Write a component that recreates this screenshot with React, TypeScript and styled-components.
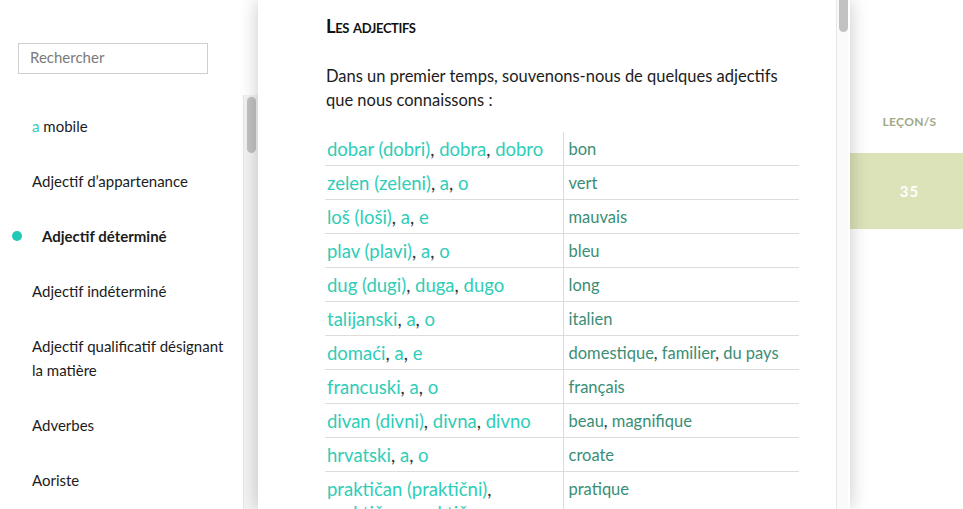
import React from "react";
import styled, { createGlobalStyle } from "styled-components";

const Global = createGlobalStyle`
  html, body { margin: 0; padding: 0; height: 100%; overflow: hidden; background: #fff; }
  #root { height: 100%; }
  * { box-sizing: border-box; }
  body { font-family: Lato, "Open Sans", sans-serif; color: #1c1c1c; }
`;

const Page = styled.div`
  display: flex;
  height: 509px;
  width: 963px;
  overflow: hidden;
`;

const Sidebar = styled.aside`
  width: 258px;
  flex: none;
  display: flex;
  flex-direction: column;
  background: #fff;
`;

const SearchWrap = styled.div`
  padding: 43px 0 0 18px;
  height: 95px;
  flex: none;
`;

const SearchInput = styled.input`
  width: 190px;
  height: 31px;
  border: 1px solid #cfcfcf;
  padding: 0 11px 3px;
  font-family: Lato, sans-serif;
  font-size: 15px;
  color: #333;
  outline: none;
  &::placeholder { color: #7a7a7a; }
`;

const ListArea = styled.div`
  flex: 1;
  display: flex;
  min-height: 0;
`;

const List = styled.ul`
  list-style: none;
  margin: 0;
  padding: 4px 0 0;
  flex: 1;
  overflow: hidden;
`;

const Item = styled.li<{ $active?: boolean }>`
  display: flex;
  align-items: center;
  padding: 15px 12px 16px ${(p) => (p.$active ? "12px" : "32px")};
  font-size: 15px;
  line-height: 24px;
  font-weight: ${(p) => (p.$active ? 700 : 400)};
  color: #1c1c1c;
`;

const Dot = styled.span`
  width: 10px;
  height: 10px;
  border-radius: 50%;
  background: #22c9b4;
  flex: none;
  margin-right: 20px;
`;

const Teal = styled.span`
  color: #2fcdb7;
`;

const Track = styled.div<{ $top: number; $len: number }>`
  width: 15px;
  flex: none;
  background: #f3f3f3;
  border-left: 1px solid #e6e6e6;
  padding: ${(p) => p.$top}px 0 0 3px;
  &::after {
    content: "";
    display: block;
    width: 9px;
    height: ${(p) => p.$len}px;
    border-radius: 5px;
    background: #c2c2c2;
  }
`;

const Main = styled.main`
  width: 592px;
  flex: none;
  display: flex;
  background: #fff;
  position: relative;
  z-index: 2;
  box-shadow: 0 0 18px rgba(0, 0, 0, 0.22);
`;

const Content = styled.div`
  flex: 1;
  padding: 16px 0 0 68px;
  overflow: hidden;
`;

const Heading = styled.h2`
  margin: 0;
  font-size: 18.5px;
  font-weight: 700;
  font-variant: small-caps;
  letter-spacing: -0.4px;
  line-height: 20px;
  color: #111;
`;

const Para = styled.p`
  margin: 28px 0 0;
  width: 472px;
  font-size: 16.5px;
  line-height: 24px;
  color: #1c1c1c;
`;

const Table = styled.table`
  margin-top: 20px;
  margin-left: -1px;
  border-collapse: collapse;
  width: 474px;
  table-layout: fixed;
`;

const Cell = styled.td<{ $word?: boolean }>`
  vertical-align: top;
  width: ${(p) => (p.$word ? "238px" : "auto")};
  padding: ${(p) => (p.$word ? "5px 4px 4px 2px" : "5px 4px 4px 5px")};
  line-height: 24px;
  font-size: ${(p) => (p.$word ? "18.5px" : "16.5px")};
  color: ${(p) => (p.$word ? "#2fcdb7" : "#3a8e76")};
  border-bottom: 1px solid #dcdcdc;
  border-left: ${(p) => (p.$word ? "none" : "1px solid #dcdcdc")};
`;

const Comma = styled.span`
  color: #333;
`;

const MainTrack = styled.div`
  width: 14px;
  flex: none;
  background: #fafafa;
  border-left: 1px solid #e8e8e8;
  border-right: 2px solid #fff;
  padding-left: 2px;
  &::after {
    content: "";
    display: block;
    width: 9px;
    height: 38px;
    margin-top: -6px;
    border-radius: 5px;
    background: #c2c2c2;
  }
`;

const Right = styled.aside`
  flex: 1;
  display: flex;
  flex-direction: column;
  background: #fff;
`;

const Label = styled.div`
  padding: 114px 0 0 6px;
  height: 153px;
  text-align: center;
  font-size: 12px;
  font-weight: 700;
  letter-spacing: 0.3px;
  color: #a1a787;
`;

const Lesson = styled.div`
  height: 76px;
  background: #dce3b9;
  display: flex;
  align-items: center;
  justify-content: center;
  padding-left: 6px;
  color: #fff;
  font-size: 15px;
  font-weight: 700;
  letter-spacing: 1px;
`;

const items: { label: React.ReactNode; active?: boolean }[] = [
  { label: <><Teal>a</Teal> mobile</> },
  { label: "Adjectif d’appartenance" },
  { label: "Adjectif déterminé", active: true },
  { label: "Adjectif indéterminé" },
  { label: "Adjectif qualificatif désignant la matière" },
  { label: "Adverbes" },
  { label: "Aoriste" },
  { label: "Article" },
];

const rows: [string, string][] = [
  ["dobar (dobri), dobra, dobro", "bon"],
  ["zelen (zeleni), a, o", "vert"],
  ["loš (loši), a, e", "mauvais"],
  ["plav (plavi), a, o", "bleu"],
  ["dug (dugi), duga, dugo", "long"],
  ["talijanski, a, o", "italien"],
  ["domaći, a, e", "domestique, familier, du pays"],
  ["francuski, a, o", "français"],
  ["divan (divni), divna, divno", "beau, magnifique"],
  ["hrvatski, a, o", "croate"],
  ["praktičan (praktični), praktična, praktično", "pratique"],
];

const withCommas = (s: string) =>
  s.split(", ").map((part, i, arr) => (
    <React.Fragment key={i}>
      {part}
      {i < arr.length - 1 && <><Comma>,</Comma> </>}
    </React.Fragment>
  ));

export default function App() {
  return (
    <>
      <Global />
      <Page>
        <Sidebar>
          <SearchWrap>
            <SearchInput placeholder="Rechercher" />
          </SearchWrap>
          <ListArea>
            <List>
              {items.map((it, i) => (
                <Item key={i} $active={it.active}>
                  {it.active && <Dot />}
                  <span>{it.label}</span>
                </Item>
              ))}
            </List>
            <Track $top={2} $len={56} />
          </ListArea>
        </Sidebar>
        <Main>
          <Content>
            <Heading>Les adjectifs</Heading>
            <Para>
              Dans un premier temps, souvenons-nous de quelques adjectifs que nous connaissons :
            </Para>
            <Table>
              <tbody>
                {rows.map(([w, t], i) => (
                  <tr key={i}>
                    <Cell $word>{withCommas(w)}</Cell>
                    <Cell>{withCommas(t)}</Cell>
                  </tr>
                ))}
              </tbody>
            </Table>
          </Content>
          <MainTrack />
        </Main>
        <Right>
          <Label>LEÇON/S</Label>
          <Lesson>35</Lesson>
        </Right>
      </Page>
    </>
  );
}
